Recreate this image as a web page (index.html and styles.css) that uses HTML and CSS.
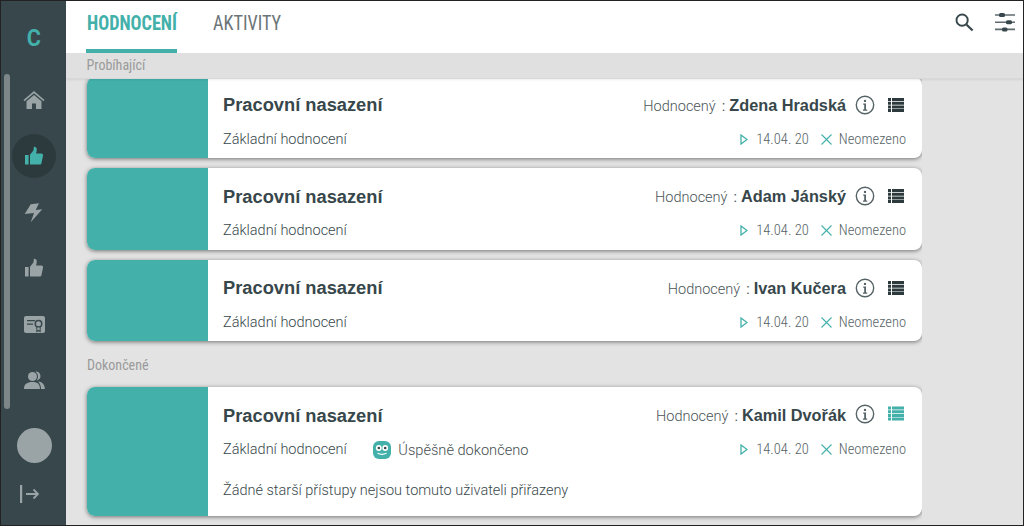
FILE: index.html
```html
<!DOCTYPE html>
<html lang="cs">
<head>
<meta charset="utf-8">
<title>Hodnocení</title>
<link rel="stylesheet" href="styles.css">
</head>
<body>
<svg class="defs" width="0" height="0" aria-hidden="true">
  <symbol id="i-info" viewBox="0 0 20 20">
    <circle cx="10" cy="10" r="8.7" fill="none" stroke="currentColor" stroke-width="1.4"/>
    <circle cx="10" cy="5.900" r="1.200" fill="currentColor"/>
    <path d="M8.200 8.500h2.800v6h1.200v1.200H7.900v-1.200h1.300V9.700h-1z" fill="currentColor"/>
  </symbol>
  <symbol id="i-list" viewBox="0 0 16 14">
    <path d="M0 0h3v3H0zM4 0h12v3H4zM0 3.700h3v3H0zM4 3.700h12v3H4zM0 7.400h3v3H0zM4 7.400h12v3H4zM0 11h3v3H0zM4 11h12v3H4z" fill="currentColor"/>
  </symbol>
  <symbol id="i-play" viewBox="0 0 8 11">
    <path d="M1 1l6 4.500L1 10z" fill="none" stroke="currentColor" stroke-width="1.300"/>
  </symbol>
  <symbol id="i-x" viewBox="0 0 11 11">
    <path d="M.500.500l10 10M10.500.500l-10 10" fill="none" stroke="currentColor" stroke-width="1.100"/>
  </symbol>
  <symbol id="i-thumb" viewBox="0 0 20 20">
    <path d="M1 9h3.600v9.600H1zM6 18.600V8.700l3.400-4.200.5-3.800c1.800-.2 2.900 1 2.900 2.800 0 1.300-.4 2.900-.8 4.100h5.300c1.300 0 2 1 1.700 2.200l-1.500 7.200c-.2 1-.9 1.600-1.900 1.600z" fill="currentColor"/>
  </symbol>
</svg>
<div class="app">
  <nav class="rail">
    <div class="rail-scroll"></div>
    <div class="logo">C</div>
    <div class="rail-icons">
      <a class="rail-item">
        <svg width="22" height="20" viewBox="0 0 22 20"><path d="M11 1L.5 10l1 1.200L11 3.200l9.500 8 1-1.200zM11 5L3.500 11.300V19H9v-5.500h4V19h5.500v-7.700z" fill="currentColor"/></svg>
      </a>
      <a class="rail-item is-active">
        <svg width="20" height="20"><use href="#i-thumb"/></svg>
      </a>
      <a class="rail-item">
        <svg width="20" height="20" viewBox="0 -1 20 20"><path d="M6.700 1.300L15 .3l-3.300 6.700 6.600-.7L6.700 19.300 10 10 .7 11z" fill="currentColor"/></svg>
      </a>
      <a class="rail-item">
        <svg width="20" height="20"><use href="#i-thumb"/></svg>
      </a>
      <a class="rail-item">
        <svg width="21" height="17" viewBox="0 0 21 17"><rect width="21" height="17" rx="2" fill="currentColor"/><path d="M3 4h8v1.300H3zM3 7.500h6v1.300H3z" fill="#37474b"/><circle cx="14.500" cy="7.800" r="4" fill="#37474b"/><circle cx="14.500" cy="7.800" r="2.500" fill="currentColor"/><path d="M12.300 11h4.400v5.500l-2.200-1.300-2.200 1.300z" fill="#37474b"/><path d="M13.300 11.500h2.400v3l-1.200-.7-1.200.7z" fill="currentColor"/></svg>
      </a>
      <a class="rail-item">
        <svg width="21" height="20" viewBox="0 0 21 20"><circle cx="8.500" cy="6.500" r="4.500" fill="currentColor"/><path d="M0 19c0-5 3-7 8.500-7s7.500 2.500 7.500 7zM12 1.500a4.500 4.500 0 0 1 2 8.500c-.5.300-1 .5-1.500.4 1-1.200 1.500-2.400 1.500-3.900 0-2-1-3.700-2.500-4.800zM14 11.500c4 .3 6.500 2.500 7 7.500h-4c0-3-1-5.500-3-7.500z" fill="currentColor"/></svg>
      </a>
    </div>
    <div class="avatar"></div>
    <a class="exit">
      <svg width="20" height="18" viewBox="0 0 20 18"><path d="M1 0v18" stroke="currentColor" stroke-width="2.400" fill="none"/><path d="M6 9h12M13.500 4.500L18 9l-4.500 4.500" stroke="currentColor" stroke-width="1.800" fill="none"/></svg>
    </a>
  </nav>
  <div class="main">
    <header class="topbar">
      <div class="tab tab-first is-active"><span>HODNOCENÍ</span></div>
      <div class="tab tab-second"><span>AKTIVITY</span></div>
      <div class="top-actions">
        <svg width="19" height="19" viewBox="0 0 20 20"><circle cx="7.500" cy="7.500" r="5.900" fill="none" stroke="currentColor" stroke-width="2"/><path d="M12 12l6.500 6.500" stroke="currentColor" stroke-width="2.300" fill="none"/></svg>
        <svg width="20" height="20" viewBox="0 0 20 20"><path d="M0 2h20M0 9.200h20M0 16.400h20" stroke="#5f6b6e" stroke-width="1.600" fill="none"/><rect x="4" y="0" width="6" height="4" rx="1.500" fill="currentColor"/><rect x="11" y="7.200" width="6" height="4" rx="1.500" fill="currentColor"/><rect x="7" y="14.400" width="5.500" height="4" rx="1.500" fill="currentColor"/></svg>
      </div>
    </header>
    <div class="section-sticky">Probíhající</div>
    <div class="content">
      <article class="card card-first">
        <div class="card-color"></div>
        <div class="card-body">
          <div class="row-top">
            <h2>Pracovní nasazení</h2>
            <div class="person"><span class="lbl">Hodnocený</span><span class="colon">:</span><strong>Zdena Hradská</strong></div>
            <svg class="ic-info" width="20" height="20"><use href="#i-info"/></svg>
            <svg class="ic-list" width="16" height="14"><use href="#i-list"/></svg>
          </div>
          <div class="row-sub">
            <span class="type">Základní hodnocení</span>
            <div class="dates"><svg class="ic-play" width="8" height="11"><use href="#i-play"/></svg><span>14.04. 20</span><svg class="ic-x" width="11" height="11"><use href="#i-x"/></svg><span>Neomezeno</span></div>
          </div>
        </div>
      </article>
      <article class="card">
        <div class="card-color"></div>
        <div class="card-body">
          <div class="row-top">
            <h2>Pracovní nasazení</h2>
            <div class="person"><span class="lbl">Hodnocený</span><span class="colon">:</span><strong>Adam Jánský</strong></div>
            <svg class="ic-info" width="20" height="20"><use href="#i-info"/></svg>
            <svg class="ic-list" width="16" height="14"><use href="#i-list"/></svg>
          </div>
          <div class="row-sub">
            <span class="type">Základní hodnocení</span>
            <div class="dates"><svg class="ic-play" width="8" height="11"><use href="#i-play"/></svg><span>14.04. 20</span><svg class="ic-x" width="11" height="11"><use href="#i-x"/></svg><span>Neomezeno</span></div>
          </div>
        </div>
      </article>
      <article class="card">
        <div class="card-color"></div>
        <div class="card-body">
          <div class="row-top">
            <h2>Pracovní nasazení</h2>
            <div class="person"><span class="lbl">Hodnocený</span><span class="colon">:</span><strong>Ivan Kučera</strong></div>
            <svg class="ic-info" width="20" height="20"><use href="#i-info"/></svg>
            <svg class="ic-list" width="16" height="14"><use href="#i-list"/></svg>
          </div>
          <div class="row-sub">
            <span class="type">Základní hodnocení</span>
            <div class="dates"><svg class="ic-play" width="8" height="11"><use href="#i-play"/></svg><span>14.04. 20</span><svg class="ic-x" width="11" height="11"><use href="#i-x"/></svg><span>Neomezeno</span></div>
          </div>
        </div>
      </article>
      <div class="section">Dokončené</div>
      <article class="card card-done">
        <div class="card-color"></div>
        <div class="card-body">
          <div class="row-top">
            <h2>Pracovní nasazení</h2>
            <div class="person"><span class="lbl">Hodnocený</span><span class="colon">:</span><strong>Kamil Dvořák</strong></div>
            <svg class="ic-info" width="20" height="20"><use href="#i-info"/></svg>
            <svg class="ic-list is-teal" width="16" height="15"><use href="#i-list"/></svg>
          </div>
          <div class="row-sub">
            <span class="type">Základní hodnocení</span>
            <span class="status">
              <svg width="18" height="18" viewBox="0 0 18 18"><rect width="18" height="18" rx="6" fill="#43b0aa"/><circle cx="5.800" cy="7" r="2.900" fill="#fff"/><circle cx="12.200" cy="7" r="2.900" fill="#fff"/><circle cx="5.800" cy="7" r="1.300" fill="#37474b"/><circle cx="12.200" cy="7" r="1.300" fill="#37474b"/><path d="M4.500 12.300c3 1.300 6 1.300 9 0" stroke="#fff" stroke-width="1.200" fill="none"/></svg>
              Úspěšně dokončeno
            </span>
            <div class="dates"><svg class="ic-play" width="8" height="11"><use href="#i-play"/></svg><span>14.04. 20</span><svg class="ic-x" width="11" height="11"><use href="#i-x"/></svg><span>Neomezeno</span></div>
          </div>
          <p class="note">Žádné starší přístupy nejsou tomuto uživateli přiřazeny</p>
        </div>
      </article>
    </div>
  </div>
</div>
</body>
</html>
```
FILE: styles.css
```css
* { box-sizing: border-box; }
html, body { margin: 0; height: 100%; }
body { font-family: "Roboto", "Liberation Sans", sans-serif; color: #37474b; overflow: hidden; }
.defs { position: absolute; }
.app { display: flex; width: 1024px; height: 526px; border: 1px solid #222; background: #e3e3e3; overflow: hidden; }

.rail { position: relative; width: 65px; flex: none; background: #37474b; color: #9aa3a5; display: flex; flex-direction: column; align-items: center; padding-left: 1px; }
.rail-scroll { position: absolute; left: 3px; top: 73px; width: 6px; height: 335px; border-radius: 3px; background: #7d8789; }
.logo { height: 77px; padding-top: 22px; font-size: 24px; font-weight: 700; color: #43b0aa; line-height: 30px; transform: scaleX(.9); }
.rail-icons { display: flex; flex-direction: column; align-items: center; gap: 12px; }
.rail-item { width: 44px; height: 44px; border-radius: 50%; display: flex; align-items: center; justify-content: center; }
.rail-item.is-active { background: #2d3a3d; color: #43b0aa; margin-left: -1px; }
.avatar { width: 35px; height: 35px; border-radius: 50%; background: #9aa3a5; margin-top: 26px; }
.exit { margin-top: 22px; margin-right: 9px; display: flex; }

.main { flex: 1; min-width: 0; display: flex; flex-direction: column; }
.topbar { height: 52px; flex: none; background: #fff; display: flex; padding-left: 20px; position: relative; }
.tab { height: 52px; font-size: 20px; line-height: 44px; font-weight: 400; color: #6b7577; font-stretch: condensed; white-space: nowrap; }
.tab span { display: inline-block; transform: scaleX(.91); transform-origin: left center; }
.tab-first { width: 91px; margin-right: 36px; padding-left: 1px; }
.tab-second { width: 70px; }
.tab.is-active { font-weight: 700; color: #43b0aa; border-bottom: 4px solid #43b0aa; }
.top-actions { margin-left: auto; display: flex; gap: 21px; padding: 12px 8px 0 0; height: 40px; }

.section-sticky { height: 26px; flex: none; padding: 4px 0 0 20.5px; font-size: 14px; font-stretch: condensed; line-height: 16px; color: #9a9a9a; background: #e0e0e0; border-bottom: 1px solid #d8d8d8; box-shadow: 0 1px 2px rgba(0,0,0,.08); position: relative; z-index: 1; }
.content { flex: 1; min-height: 0; overflow: hidden; padding-left: 21px; width: 856px; }

.card { display: flex; height: 81.5px; margin: 0 0 10px; background: #fff; border-radius: 8px; box-shadow: 0 1px 4px rgba(0,0,0,.5); overflow: hidden; }
.card-first { margin-top: -2.500px; }
.card-done { height: 129px; margin-bottom: 0; }
.card-color { width: 121px; flex: none; background: #43b0aa; }
.card-body { flex: 1; min-width: 0; padding: 15px 16px 0 15px; }
.row-top { display: flex; align-items: center; height: 26px; }
h2 { margin: 0 auto 0 0; padding-top: 1.400px; font-size: 18.3px; line-height: 26px; font-weight: 700; font-family: "Liberation Sans", sans-serif; color: #37474b; }
.person { display: flex; align-items: baseline; padding-top: 1.400px; font-size: 14.5px; font-family: "Roboto", sans-serif; }
.lbl { color: #4a5558; font-weight: 300; }
.colon { margin: 0 4px 0 6px; color: #4a5558; }
.person strong { font-family: "Liberation Sans", sans-serif; font-size: 16.3px; font-weight: 700; color: #37474b; }
.ic-info { margin-left: 9px; color: #566366; }
.ic-list { margin-left: 13px; margin-right: 2px; color: #2d3a3d; }
.ic-list.is-teal { color: #43b0aa; }
.card-done .ic-info, .card-done .ic-list { margin-top: -3px; }

.row-sub { display: flex; align-items: center; height: 22px; margin-top: 10.700px; font-size: 14.5px; color: #444e50; }
.type { font-weight: 300; color: #37474b; }
.status { display: flex; align-items: center; gap: 7px; margin-left: 26.500px; font-size: 14.6px; font-weight: 300; }
.dates { margin-left: auto; display: flex; align-items: center; font-size: 14.5px; font-weight: 300; font-stretch: condensed; color: #566366; }
.ic-play { color: #43b0aa; margin-right: 8px; }
.ic-x { color: #43b0aa; margin: 0 7px 0 12px; }
.note { margin: 20.5px 0 0; font-size: 14.5px; font-weight: 300; color: #37474b; line-height: 20px; }

.section { height: 36px; padding-top: 4px; font-size: 14px; font-stretch: condensed; line-height: 20px; color: #9a9a9a; }
```
